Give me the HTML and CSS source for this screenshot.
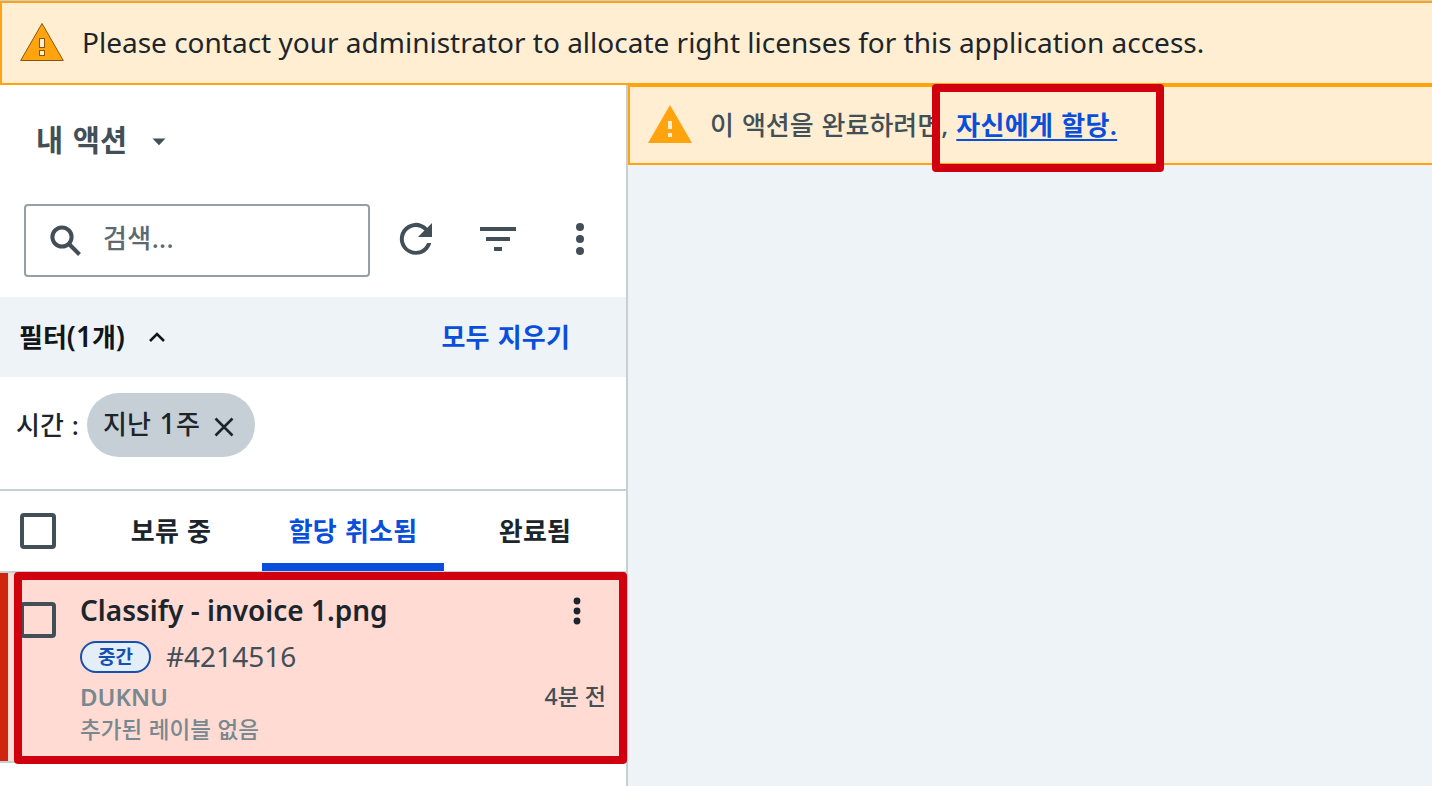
FILE: index.html
```html
<!DOCTYPE html>
<html lang="ko">
<head>
<meta charset="utf-8">
<title>내 액션</title>
<link rel="stylesheet" href="styles.css">
</head>
<body>
<div class="app">
  <div class="license-alert">
    <svg class="warn-icon" width="44" height="40" viewBox="0 0 44 40"><path d="M22 1.5 L43.3 38.5 H.7 Z" fill="#ffa40e" stroke="#8a560a" stroke-width="1"/><rect x="19.500" y="16.500" width="5" height="9" fill="#ffeed2" stroke="#8a560a"/><rect x="19.500" y="28.500" width="5" height="5" fill="#ffeed2" stroke="#8a560a"/></svg>
    <span class="license-text">Please contact your administrator to allocate right licenses for this application access.</span>
  </div>
  <div class="columns">
    <aside class="panel">
      <header class="panel-head">
        <h1 class="panel-title">내 액션</h1>
        <svg width="14" height="8" viewBox="0 0 14 8"><path d="M.5.5h13L7 7.200z" fill="#424f57"/></svg>
      </header>
      <div class="toolbar">
        <div class="search">
          <svg width="32" height="32" viewBox="0 0 32 32" fill="none" stroke="#424f57" stroke-width="4"><circle cx="12" cy="12" r="9.600"/><path d="M19 19l10.500 10.500"/></svg>
          <span class="placeholder">검색...</span>
        </div>
        <svg class="refresh" width="34" height="34" viewBox="0 0 34 34"><path d="M28.3 5.7A16 16 0 1 0 32.3 21h-4.2A12 12 0 1 1 25.4 8.6L19 15h14V1z" fill="#424f57"/></svg>
        <svg class="filter" width="36" height="24" viewBox="0 0 36 24" fill="#424f57"><path d="M0 0h36v4H0zM6 10h24v4H6zM14 20h8v4h-8z"/></svg>
        <svg class="more" width="8" height="32" viewBox="0 0 8 32" fill="#424f57"><circle cx="4" cy="4" r="4"/><circle cx="4" cy="16" r="4"/><circle cx="4" cy="28" r="4"/></svg>
      </div>
      <div class="filter-bar">
        <span class="filter-count">필터<span class="latin">(1</span>개<span class="latin">)</span></span>
        <svg width="16" height="10" viewBox="0 0 16 10"><path d="M1 9l7-7 7 7" fill="none" stroke="#11161a" stroke-width="2.600"/></svg>
        <a class="clear">모두 지우기</a>
      </div>
      <div class="chips">
        <span class="chip-label">시간 :</span>
        <span class="chip"><span class="chip-text">지난 <span class="latin">1</span>주</span>
          <svg width="20" height="20" viewBox="0 0 20 20"><path d="M1.500 1.500l17 17M18.500 1.500l-17 17" stroke="#1c252b" stroke-width="2.600"/></svg></span>
      </div>
      <nav class="tabs">
        <span class="checkbox"></span>
        <span class="tab">보류 중</span>
        <span class="tab active">할당 취소됨</span>
        <span class="tab">완료됨</span>
      </nav>
      <article class="card">
        <span class="checkbox"></span>
        <div class="card-body">
          <div class="row title-row"><span class="card-title">Classify - invoice 1.png</span>
            <svg width="8" height="28" viewBox="0 0 8 28" fill="#1c252b"><circle cx="4" cy="4" r="3.400"/><circle cx="4" cy="14" r="3.400"/><circle cx="4" cy="24" r="3.400"/></svg></div>
          <div class="row id-row"><span class="badge">중간</span><span class="id">#4214516</span></div>
          <div class="row name-row"><span class="name">DUKNU</span><span class="time">4분 전</span></div>
          <div class="row label-row">추가된 레이블 없음</div>
        </div>
        <span class="mark card-mark"></span>
      </article>
    </aside>
    <main class="content">
      <div class="assign-alert">
        <svg class="warn-icon" width="44" height="38" viewBox="0 0 44 38"><path d="M22 0L44 38H0z" fill="#ffa40e"/><path d="M20 16h4v8h-4zM20 28h4v4h-4z" fill="#ffeed2"/></svg>
        <span class="assign-text">이 액션을 완료하려면,</span>
        <a class="assign-link">자신에게 할당.</a>
        <span class="mark link-mark"></span>
      </div>
    </main>
  </div>
</div>
</body>
</html>
```
FILE: styles.css
```css
* { box-sizing: border-box; }
body { margin: 0; font-family: "Noto Sans", "Noto Sans CJK KR", sans-serif; font-size: 26px; color: #1c252b; background: #fff; }
svg { display: block; flex: none; }
span, a { white-space: nowrap; }
.latin { font-size: 28px; line-height: 1; }
.app { display: flex; flex-direction: column; width: 1432px; height: 786px; overflow: hidden; border-top: 1px solid #c6cfd3; }
.license-alert { display: flex; align-items: center; gap: 18px; height: 84px; flex: none; padding-left: 18px; border: 2px solid #ffa40e; border-right: 0; background: #ffeed2; }
.license-alert .warn-icon { margin-bottom: 2px; }
.license-text { font-size: 28px; padding-bottom: 2px; }
.columns { display: flex; flex: 1; min-height: 0; }
.panel { width: 628px; flex: none; border-right: 2px solid #c6cfd3; }
.panel-head { display: flex; align-items: center; gap: 25px; height: 119px; padding: 0 0 8px 36px; color: #424f57; }
.panel-head svg { margin-top: 2px; }
.panel-title { margin: 0; font-size: 29.5px; line-height: 40px; font-weight: 600; word-spacing: 2px; padding-bottom: 2px; }
.toolbar { display: flex; align-items: center; height: 93px; padding: 0 42px 20px 24px; }
.search { display: flex; align-items: center; gap: 21px; width: 346px; height: 73px; padding-left: 24px; border: 2px solid #93a0a6; border-radius: 4px; }
.placeholder { color: #5c6970; line-height: 40px; padding-bottom: 5px; font-weight: 500; letter-spacing: .4px; }
.refresh { margin: 0 1px 4px 29px; }
.filter { margin: 0 0 3px 46px; }
.more { margin: 0 0 3px 60px; }
.filter-bar { display: flex; align-items: center; gap: 24px; height: 80px; padding: 0 56px 0 19px; background: #eef3f8; font-weight: 600; color: #11161a; }
.filter-count, .clear { padding-bottom: 3px; }
.clear { margin-left: auto; color: #0a4edc; letter-spacing: .2px; word-spacing: 1px; }
.chips { display: flex; align-items: center; gap: 8px; height: 112px; padding: 0 0 16px 16px; font-weight: 500; word-spacing: 1.2px; }
.chip-label { padding-bottom: 3px; }
.chip { display: flex; align-items: center; gap: 14px; width: 168px; height: 64px; padding-left: 16px; border-radius: 32px; background: #c6cfd6; }
.chip-text { padding-bottom: 4px; letter-spacing: .3px; }
.chip svg { margin-top: 3px; }
.tabs { display: flex; align-items: center; height: 84px; border: solid #c6cfd3; border-width: 2px 0; padding-left: 20px; font-weight: 600; }
.checkbox { width: 36px; height: 36px; flex: none; border: 4px solid #424f57; border-radius: 4px; }
.tab { display: flex; align-items: center; justify-content: center; width: 182px; height: 80px; padding-bottom: 3px; letter-spacing: .2px; word-spacing: 1px; }
.tabs .checkbox { margin-right: 24px; }
.active { color: #0a4edc; box-shadow: inset 0 -8px #0a4edc; }
.card { position: relative; display: flex; gap: 24px; height: 190px; padding-left: 20px; border-bottom: 2px solid #c6cfd3; background: #ffdbd3; box-shadow: inset 8px 0 #d0250f; }
.card .checkbox { margin-top: 29px; }
.card-body { flex: 1; padding: 14px 20px 0 0; }
.row { display: flex; align-items: center; }
.title-row { height: 46px; justify-content: space-between; padding-right: 25px; }
.title-row svg { margin-top: 2px; }
.card-title { font-size: 28px; font-weight: 600; }
.id-row { height: 46px; gap: 15px; }
.badge { display: flex; align-items: center; justify-content: center; width: 71px; height: 32px; margin-top: 2px; padding-bottom: 3px; border: 2px solid #1550b0; border-radius: 16px; background: #e4eef9; color: #1550b0; font-size: 19px; font-weight: 600; }
.id { font-size: 28px; color: #424f57; }
.name-row { height: 34px; justify-content: space-between; }
.name { font-size: 24px; font-weight: 600; color: #788890; }
.time { font-size: 23px; color: #424f57; font-weight: 500; padding-bottom: 2px; }
.label-row { height: 30px; font-size: 22.5px; color: #788890; font-weight: 500; word-spacing: .8px; }
.content { flex: 1; background: #eef3f8; }
.assign-alert { position: relative; display: flex; align-items: center; height: 80px; padding-left: 18px; border: 2px solid #ffa40e; border-right: 0; background: #ffeed2; color: #424f57; }
.assign-alert .warn-icon { margin-bottom: 2px; }
.assign-text { margin: 0 8px 0 18px; padding-bottom: 3px; font-weight: 500; word-spacing: 1.2px; }
.assign-link { padding-bottom: 3px; color: #0a4edc; font-weight: 600; letter-spacing: .3px; word-spacing: 1px; text-decoration: underline; text-decoration-thickness: 2px; text-underline-offset: 4px; text-decoration-skip-ink: none; }
.mark { position: absolute; border: 8px solid #d0000e; border-radius: 4px; }
.card-mark { left: 14px; top: -1px; width: 613px; height: 192px; }
.link-mark { left: 302px; top: -3px; width: 232px; height: 88px; }
```
